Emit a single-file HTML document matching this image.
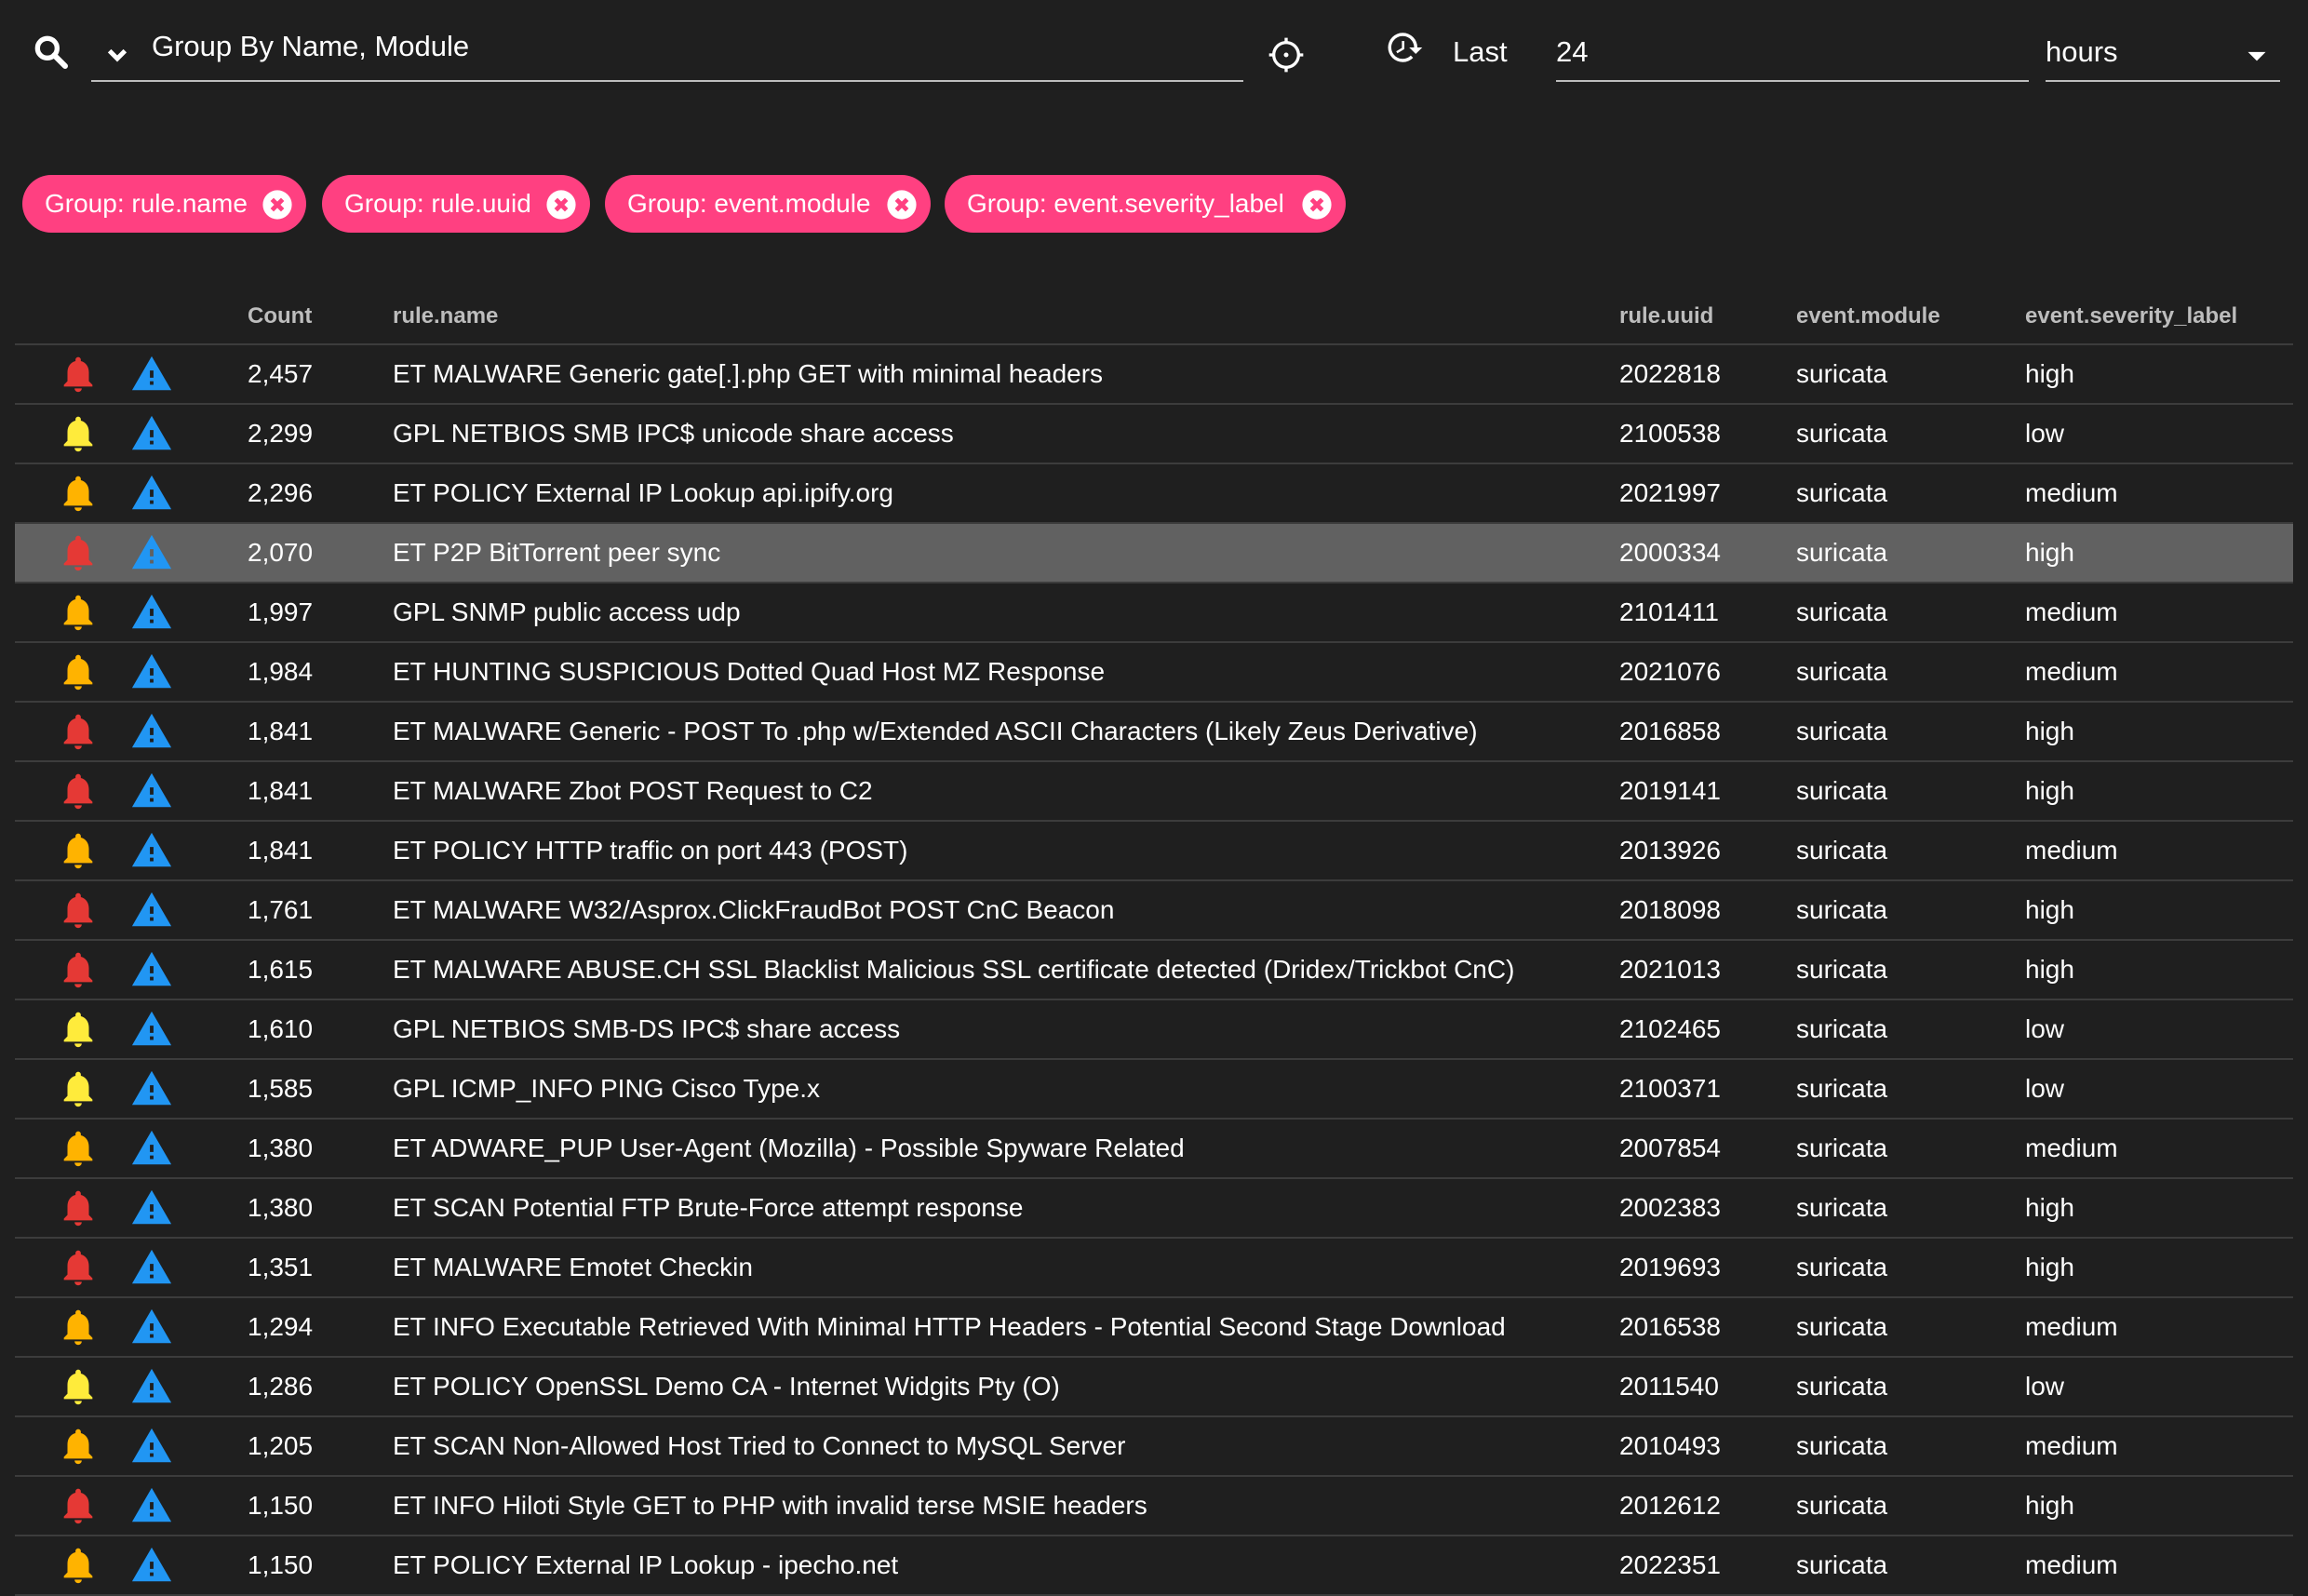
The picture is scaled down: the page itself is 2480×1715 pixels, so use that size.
<!DOCTYPE html>
<html><head><meta charset="utf-8"><style>
*{margin:0;padding:0;box-sizing:border-box}
body{width:2480px;height:1702px;background:#1f1f1f;color:#fff;font-family:"Liberation Sans",Arial,sans-serif;overflow:hidden;position:relative}
.a{position:absolute}
.t{font-size:31px;color:#fff}
.ul{position:absolute;height:2px;background:#bdbdbd}
.chip{position:absolute;top:188px;height:62px;border-radius:31px;background:#ff4081;color:#fff;font-size:28px;line-height:62px;padding-left:24px}
.chip svg{position:absolute;right:14px;top:15px}
table{position:absolute;left:16px;top:310px;width:2448px;border-collapse:collapse}
th{height:60px;font-size:24px;font-weight:bold;color:#bdbdbd;text-align:left;border-bottom:2px solid #3c3c3c;padding:0}
td{height:64px;font-size:28px;border-bottom:2px solid #3c3c3c;padding:0;white-space:nowrap}
tr.hl td{background:#616161}
td svg{display:block}
</style></head><body>
<svg class="a" style="left:35px;top:36px" width="40" height="40" viewBox="0 0 24 24"><circle cx="9.5" cy="9.5" r="6.3" fill="none" stroke="#fff" stroke-width="3.2"/><path d="M14 14l7 7" stroke="#fff" stroke-width="3.6" stroke-linecap="round"/></svg>
<svg class="a" style="left:106px;top:38px" width="40" height="40" viewBox="0 0 24 24"><path fill="none" stroke="#fff" stroke-width="3" d="M7 10l5 5 5-5"/></svg>
<div class="a t" style="left:163px;top:32px">Group By Name, Module</div>
<div class="ul" style="left:98px;top:86px;width:1238px"></div>
<svg class="a" style="left:1362px;top:39px" width="40" height="40" viewBox="0 0 24 24"><path fill="#fff" d="M12 10.5a1.5 1.5 0 1 0 0 3 1.5 1.5 0 0 0 0-3zm8.94.5A8.99 8.99 0 0 0 13 3.06V1h-2v2.06A8.99 8.99 0 0 0 3.06 11H1v2h2.06A8.99 8.99 0 0 0 11 20.94V23h2v-2.06A8.99 8.99 0 0 0 20.94 13H23v-2h-2.06zM12 19c-3.87 0-7-3.13-7-7s3.13-7 7-7 7 3.13 7 7-3.13 7-7 7z"/></svg>
<svg class="a" style="left:1488px;top:30px" width="42" height="42" viewBox="0 0 24 24"><path fill="#fff" d="M13 3a9 9 0 0 0-9 9H1l3.89 3.89.07.14L9 12H6c0-3.87 3.13-7 7-7s7 3.13 7 7-3.13 7-7 7c-1.93 0-3.68-.79-4.94-2.06l-1.42 1.42A8.954 8.954 0 0 0 13 21a9 9 0 0 0 0-18zm-1 5v5l4.28 2.54.72-1.21-3.5-2.08V8H12z" transform="translate(24 0) scale(-1 1)"/></svg>
<div class="a t" style="left:1561px;top:38px">Last</div>
<div class="a t" style="left:1672px;top:38px">24</div>
<div class="ul" style="left:1672px;top:86px;width:508px"></div>
<div class="a t" style="left:2198px;top:38px">hours</div>
<svg class="a" style="left:2406px;top:40px" width="38" height="38" viewBox="0 0 24 24"><path fill="#fff" d="M6 10l6 6 6-6z"/></svg>
<div class="ul" style="left:2198px;top:86px;width:252px"></div>

<div class="chip" style="left:24px;width:305px">Group: rule.name<svg width="34" height="34" viewBox="0 0 24 24"><circle cx="12" cy="12" r="11" fill="#fff"/><path d="M8 8l8 8M16 8l-8 8" stroke="#ff4081" stroke-width="3.4"/></svg></div>
<div class="chip" style="left:346px;width:288px">Group: rule.uuid<svg width="34" height="34" viewBox="0 0 24 24"><circle cx="12" cy="12" r="11" fill="#fff"/><path d="M8 8l8 8M16 8l-8 8" stroke="#ff4081" stroke-width="3.4"/></svg></div>
<div class="chip" style="left:650px;width:350px">Group: event.module<svg width="34" height="34" viewBox="0 0 24 24"><circle cx="12" cy="12" r="11" fill="#fff"/><path d="M8 8l8 8M16 8l-8 8" stroke="#ff4081" stroke-width="3.4"/></svg></div>
<div class="chip" style="left:1015px;width:431px">Group: event.severity_label<svg width="34" height="34" viewBox="0 0 24 24"><circle cx="12" cy="12" r="11" fill="#fff"/><path d="M8 8l8 8M16 8l-8 8" stroke="#ff4081" stroke-width="3.4"/></svg></div>

<table>
<colgroup><col style="width:122px"><col style="width:128px"><col style="width:156px"><col style="width:1318px"><col style="width:190px"><col style="width:246px"><col></colgroup>
<thead><tr><th></th><th></th><th>Count</th><th>rule.name</th><th>rule.uuid</th><th>event.module</th><th>event.severity_label</th></tr></thead>
<tbody id="tb"></tbody>
</table>
<script>
var rows=[
["2,457","ET MALWARE Generic gate[.].php GET with minimal headers","2022818","high"],
["2,299","GPL NETBIOS SMB IPC$ unicode share access","2100538","low"],
["2,296","ET POLICY External IP Lookup api.ipify.org","2021997","medium"],
["2,070","ET P2P BitTorrent peer sync","2000334","high"],
["1,997","GPL SNMP public access udp","2101411","medium"],
["1,984","ET HUNTING SUSPICIOUS Dotted Quad Host MZ Response","2021076","medium"],
["1,841","ET MALWARE Generic - POST To .php w/Extended ASCII Characters (Likely Zeus Derivative)","2016858","high"],
["1,841","ET MALWARE Zbot POST Request to C2","2019141","high"],
["1,841","ET POLICY HTTP traffic on port 443 (POST)","2013926","medium"],
["1,761","ET MALWARE W32/Asprox.ClickFraudBot POST CnC Beacon","2018098","high"],
["1,615","ET MALWARE ABUSE.CH SSL Blacklist Malicious SSL certificate detected (Dridex/Trickbot CnC)","2021013","high"],
["1,610","GPL NETBIOS SMB-DS IPC$ share access","2102465","low"],
["1,585","GPL ICMP_INFO PING Cisco Type.x","2100371","low"],
["1,380","ET ADWARE_PUP User-Agent (Mozilla) - Possible Spyware Related","2007854","medium"],
["1,380","ET SCAN Potential FTP Brute-Force attempt response","2002383","high"],
["1,351","ET MALWARE Emotet Checkin","2019693","high"],
["1,294","ET INFO Executable Retrieved With Minimal HTTP Headers - Potential Second Stage Download","2016538","medium"],
["1,286","ET POLICY OpenSSL Demo CA - Internet Widgits Pty (O)","2011540","low"],
["1,205","ET SCAN Non-Allowed Host Tried to Connect to MySQL Server","2010493","medium"],
["1,150","ET INFO Hiloti Style GET to PHP with invalid terse MSIE headers","2012612","high"],
["1,150","ET POLICY External IP Lookup - ipecho.net","2022351","medium"]];
var col={high:"#e53935",low:"#ffeb3b",medium:"#ffb300"};
var h="";
rows.forEach(function(r,i){
h+='<tr'+(i==3?' class="hl"':'')+'><td><svg style="margin-left:45px" width="46" height="46" viewBox="0 0 24 24"><path fill="'+col[r[3]]+'" d="M12 22c1.1 0 2-.9 2-2h-4c0 1.1.89 2 2 2zm6-6v-5c0-3.07-1.64-5.64-4.5-6.32V4c0-.83-.67-1.5-1.5-1.5s-1.5.67-1.5 1.5v.68C7.63 5.36 6 7.92 6 11v5l-2 2v1h16v-1l-2-2z"/></svg></td><td><svg style="margin-left:2px" width="46" height="46" viewBox="0 0 24 24"><path fill="#2196f3" d="M1 21h22L12 2 1 21zm12-3h-2v-2h2v2zm0-4h-2v-4h2v4z"/></svg></td><td>'+r[0]+'</td><td>'+r[1]+'</td><td>'+r[2]+'</td><td>suricata</td><td>'+r[3]+'</td></tr>';
});
document.getElementById("tb").innerHTML=h;
</script>
</body></html>
